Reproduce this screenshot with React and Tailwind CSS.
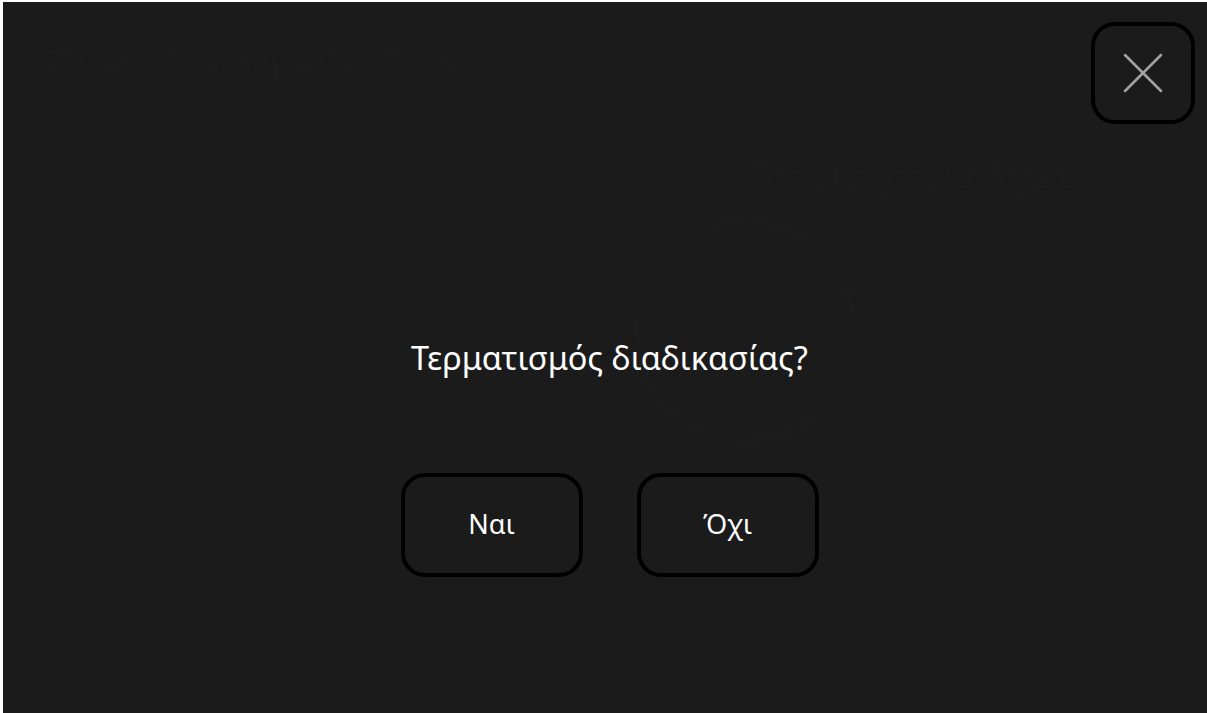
import React from 'react';

const CloseIcon = () => (
  <svg width="40" height="40" viewBox="0 0 40 40" fill="none">
    <path d="M2 2L38 38M38 2L2 38" stroke="#a3a3a3" strokeWidth="2.5" strokeLinecap="round" />
  </svg>
);

const DialogButton = ({ label }) => (
  <button className="w-[182px] h-[104px] rounded-[24px] border-[4px] border-black bg-[#1b1b1b] text-white text-[27px] flex items-center justify-center">
    {label}
  </button>
);

export default function App() {
  return (
    <div className="w-[1207px] h-[713px] bg-white pt-[2px] pl-[3px] overflow-hidden" style={{ fontFamily: '"Noto Sans", "Open Sans", sans-serif' }}>
      <div className="relative w-full h-full bg-[#1b1b1b]">
        {/* dimmed page underneath the dialog */}
        <div className="absolute inset-0 pointer-events-none select-none">
          <div className="absolute left-[40px] top-[36px] text-[30px] text-[#1d1d1d]">Επιλογή προγράμματος πλύσης</div>
          <div className="absolute left-[750px] top-[152px] text-[30px] text-[#1d1d1d]">Τοποθετήστε το δοχείο</div>
          <div className="absolute left-[632px] top-[218px] w-[222px] h-[222px] rounded-full border-[3px] border-[#1d1d1d]" />
        </div>

        <div className="relative flex flex-col h-full">
          <div className="flex justify-end pt-[20px] pr-[12px]">
            <button className="w-[104px] h-[102px] rounded-[24px] border-[4px] border-black bg-[#1b1b1b] flex items-center justify-center">
              <CloseIcon />
            </button>
          </div>

          <div className="flex flex-col items-center pl-[9px] pt-[218px]">
            <h1 className="text-[32.5px] text-white leading-none font-normal">Τερματισμός διαδικασίας?</h1>
            <div className="flex gap-[54px] mt-[98px]">
              <DialogButton label="Ναι" />
              <DialogButton label="Όχι" />
            </div>
          </div>
        </div>
      </div>
    </div>
  );
}
